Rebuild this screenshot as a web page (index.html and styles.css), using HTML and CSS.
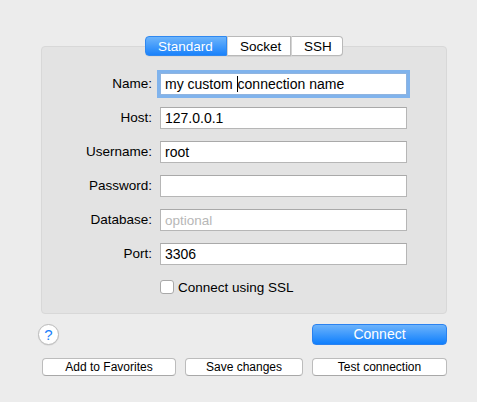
FILE: index.html
```html
<!DOCTYPE html>
<html>
<head>
<meta charset="utf-8">
<link rel="stylesheet" href="styles.css">
</head>
<body>
<div class="window">
  <div class="tabs">
    <div class="tab selected">Standard</div>
    <div class="tab">Socket</div>
    <div class="tab">SSH</div>
  </div>
  <div class="panel">
    <div class="form">
      <label class="label">Name:</label>
      <div class="field focused"><span>my custom&nbsp;</span><span class="caret"></span><span>connection name</span></div>
      <label class="label">Host:</label>
      <div class="field">127.0.0.1</div>
      <label class="label">Username:</label>
      <div class="field">root</div>
      <label class="label">Password:</label>
      <div class="field"></div>
      <label class="label">Database:</label>
      <div class="field placeholder">optional</div>
      <label class="label">Port:</label>
      <div class="field">3306</div>
      <div class="check-row">
        <span class="checkbox"></span>
        <span class="check-label">Connect using SSL</span>
      </div>
    </div>
  </div>
  <div class="actions">
    <div class="help">?</div>
    <div class="connect">Connect</div>
  </div>
  <div class="buttons">
    <div class="btn btn-fav">Add to Favorites</div>
    <div class="btn btn-save">Save changes</div>
    <div class="btn btn-test">Test connection</div>
  </div>
</div>
</body>
</html>
```

FILE: styles.css
```css
html, body {
  margin: 0;
  padding: 0;
  background: #ececec;
}
body {
  font-family: "Liberation Sans", Arial, Helvetica, sans-serif;
  color: #111;
  width: 477px;
  height: 402px;
  overflow: hidden;
}
.window {
  padding: 36px 30px 0 41px;
  width: 406px;
}
.tabs {
  display: flex;
  justify-content: center;
  margin-bottom: -10px;
  position: relative;
  z-index: 2;
}
.tab {
  height: 18px;
  line-height: 19px;
  font-size: 13.5px;
  background: #fff;
  border: 1px solid #b9b9b9;
  border-left: 1px solid #d4d4d4;
  padding: 0 12px;
  color: #000;
  box-shadow: 0 0.5px 0.5px rgba(0,0,0,0.08);
}
.tab:first-child {
  border-left: 1px solid #b9b9b9;
  border-radius: 4px 0 0 4px;
}
.tab:last-child {
  border-radius: 0 4px 4px 0;
}
.tab.selected {
  width: 56px;
  background: linear-gradient(#6cb4fb, #1a82fb);
  border-color: #2f88f0;
  color: #fff;
}
.tab:nth-child(2) { width: 38px; }
.tab:nth-child(3) { width: 26px; }
.panel {
  background: #e3e3e3;
  border: 1px solid #d8d8d8;
  border-radius: 4px;
  padding-top: 26px;
  box-sizing: border-box;
  height: 268px;
}
.form {
  display: grid;
  grid-template-columns: 110px 247px;
  column-gap: 8px;
  row-gap: 12px;
  grid-auto-rows: 22px;
}
.label {
  font-size: 13.5px;
  text-align: right;
  line-height: 22px;
  color: #000;
}
.field {
  background: #fff;
  border: 1px solid #b6b6b6;
  border-top-color: #a9a9a9;
  box-sizing: border-box;
  height: 22px;
  font-size: 14px;
  line-height: 21px;
  padding-left: 4px;
  color: #000;
  white-space: nowrap;
  display: flex;
  align-items: center;
}
.field.focused {
  border-color: #8fb4e0;
  box-shadow: 0 0 0 3px #80b3ec;
}
.caret {
  display: inline-block;
  width: 1px;
  height: 16px;
  background: #000;
}
.placeholder {
  color: #b7b7b7;
  font-size: 13.5px;
}
.check-row {
  grid-column: 2;
  display: flex;
  align-items: center;
  gap: 4px;
  margin-top: -2px;
}
.checkbox {
  width: 12px;
  height: 12px;
  background: #fff;
  border: 1px solid #a9a9a9;
  border-radius: 3px;
}
.check-label {
  font-size: 13.5px;
  color: #000;
}
.actions {
  display: flex;
  justify-content: space-between;
  align-items: center;
  margin-top: 10px;
}
.help {
  width: 19px;
  height: 19px;
  margin-left: -3px;
  border: 1px solid #bcbcbc;
  border-radius: 50%;
  background: #fff;
  color: #1a7ffb;
  font-size: 15px;
  text-align: center;
  line-height: 20px;
  box-shadow: 0 0.5px 1px rgba(0,0,0,0.12);
}
.connect {
  width: 135px;
  height: 21px;
  box-sizing: border-box;
  border-radius: 4px;
  background: linear-gradient(#6cb3fb, #0f7ffd);
  border: 1px solid #2a82f0;
  color: #fff;
  font-size: 14px;
  text-align: center;
  line-height: 19px;
}
.buttons {
  display: flex;
  justify-content: space-between;
  margin-top: 13px;
}
.btn {
  height: 18px;
  box-sizing: border-box;
  background: #fff;
  border: 1px solid #bcbcbc;
  border-bottom-color: #a8a8a8;
  border-radius: 4px;
  font-size: 12px;
  text-align: center;
  line-height: 16px;
  color: #000;
}
.btn-fav { width: 134px; margin-left: 1px; }
.btn-save { width: 118px; }
.btn-test { width: 135px; }
```
